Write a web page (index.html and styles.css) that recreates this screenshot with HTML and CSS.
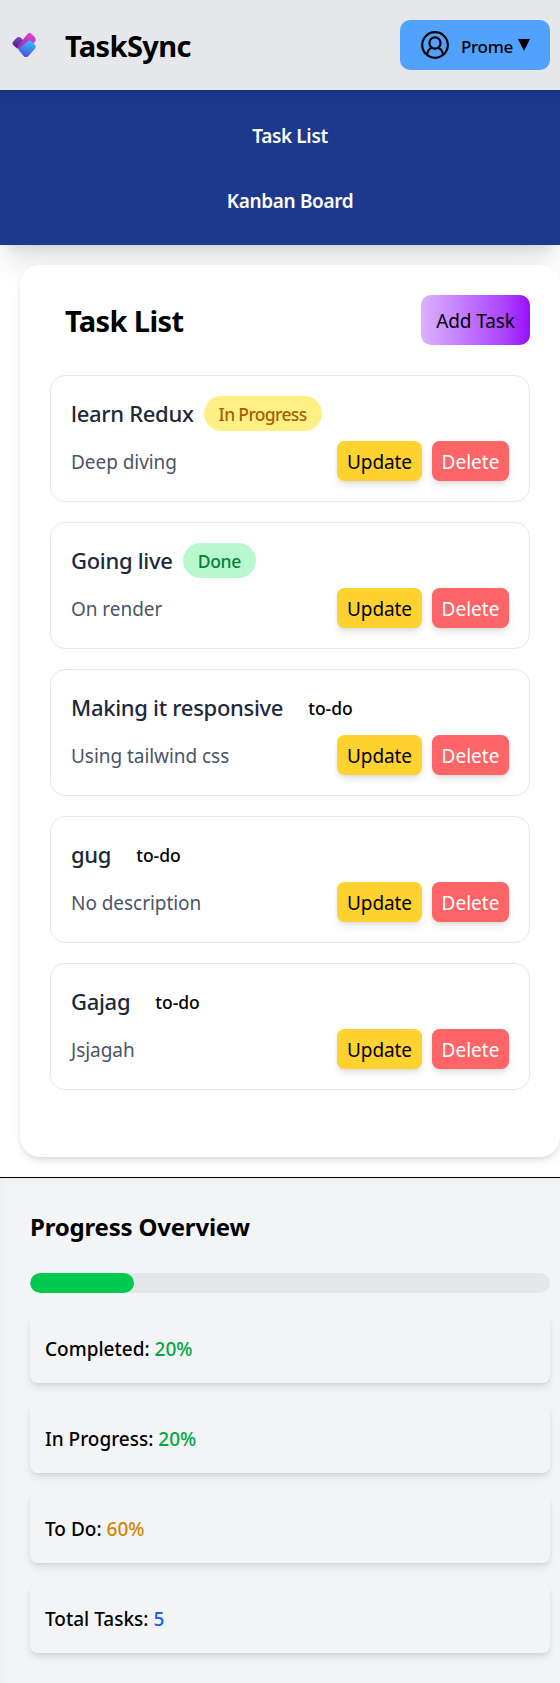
FILE: index.html
```html
<!DOCTYPE html>
<html lang="en">
<head>
<meta charset="utf-8">
<title>TaskSync</title>
<link rel="stylesheet" href="styles.css">
</head>
<body>
<header class="header">
  <div class="brand">
    <svg class="logo" viewBox="0 0 50 50" aria-hidden="true">
      <defs>
        <linearGradient id="violet" x1="0" y1="0" x2="0" y2="1"><stop offset="0" stop-color="#7048c4"/><stop offset="1" stop-color="#4b168c"/></linearGradient>
        <linearGradient id="pink" x1="1" y1="0" x2="0" y2="1"><stop offset="0" stop-color="#e047dc"/><stop offset="1" stop-color="#991fa6"/></linearGradient>
        <linearGradient id="blue" x1="0.7" y1="0" x2="0.4" y2="1"><stop offset="0" stop-color="#36bffa"/><stop offset="1" stop-color="#4a4ee0"/></linearGradient>
      </defs>
      <path fill="url(#violet)" d="M13.2 21.6 16.5 18.1Q18.8 15.9 21.1 18.1L24 21 17 28.5 13.2 25Q11.7 23.3 13.2 21.6Z"/>
      <path fill="url(#pink)" d="M16.5 27.8 27.2 14.3Q29.6 11.8 32 14.3L34.8 17.2Q36.8 19.5 34.8 21.8L26 33Z"/>
      <path fill="url(#blue)" d="M18 29.3 27.2 21.7Q29.6 19.4 32 21.7L34.8 24.5Q36.8 26.8 34.8 29.1L28.4 35.9Q26 38.3 23.6 35.9Z"/>
    </svg>
    <span class="brand-name">TaskSync</span>
  </div>
  <button class="user">
    <svg class="user-icon" viewBox="0 0 28 28" fill="none" stroke="#000" stroke-width="2.2" aria-hidden="true">
      <circle cx="14" cy="14" r="12.8"/>
      <circle cx="14" cy="12" r="5.6"/>
      <path d="M6 24C6.5 19.8 9 17.3 11.2 16.8M22 24C21.500 19.8 19 17.3 16.8 16.800"/>
    </svg>
    <span class="user-name">Prome</span>
    <svg class="caret" viewBox="0 0 12 12" aria-hidden="true"><path d="M0 0H12L6 12Z"/></svg>
  </button>
</header>
<nav class="nav">
  <a class="nav-link">Task List</a>
  <a class="nav-link">Kanban Board</a>
</nav>
<main class="panel">
  <div class="panel-head">
    <h1 class="panel-title">Task List</h1>
    <button class="add">Add Task</button>
  </div>
  <div class="tasks">
    <article class="task">
      <div class="task-top"><h2 class="task-title">learn Redux</h2><span class="badge badge-progress">In Progress</span></div>
      <div class="task-row"><p class="desc">Deep diving</p><button class="btn update">Update</button><button class="btn delete">Delete</button></div>
    </article>
    <article class="task">
      <div class="task-top"><h2 class="task-title">Going live</h2><span class="badge badge-done">Done</span></div>
      <div class="task-row"><p class="desc">On render</p><button class="btn update">Update</button><button class="btn delete">Delete</button></div>
    </article>
    <article class="task">
      <div class="task-top"><h2 class="task-title">Making it responsive</h2><span class="badge">to-do</span></div>
      <div class="task-row"><p class="desc">Using tailwind css</p><button class="btn update">Update</button><button class="btn delete">Delete</button></div>
    </article>
    <article class="task">
      <div class="task-top"><h2 class="task-title">gug</h2><span class="badge">to-do</span></div>
      <div class="task-row"><p class="desc">No description</p><button class="btn update">Update</button><button class="btn delete">Delete</button></div>
    </article>
    <article class="task">
      <div class="task-top"><h2 class="task-title">Gajag</h2><span class="badge">to-do</span></div>
      <div class="task-row"><p class="desc">Jsjagah</p><button class="btn update">Update</button><button class="btn delete">Delete</button></div>
    </article>
  </div>
</main>
<section class="overview">
  <h2 class="overview-title">Progress Overview</h2>
  <div class="bar"><div class="bar-fill" style="width:20%"></div></div>
  <div class="stats">
    <p class="stat">Completed: <span class="green">20%</span></p>
    <p class="stat">In Progress: <span class="green">20%</span></p>
    <p class="stat">To Do: <span class="amber">60%</span></p>
    <p class="stat">Total Tasks: <span class="blue">5</span></p>
  </div>
</section>
</body>
</html>
```
FILE: styles.css
```css
* { box-sizing: border-box; margin: 0; padding: 0; }
body { overflow-x: hidden; background: #fff; color: #000; font-family: "Noto Sans", "Open Sans", sans-serif; font-size: 19px; line-height: 30px; }
button { border: 0; font: inherit; color: inherit; white-space: nowrap; }
.header { display: flex; align-items: center; justify-content: space-between; height: 90px; padding-right: 10px; background: #e5e7eb; }
.brand { display: flex; align-items: center; gap: 15px; }
.logo { width: 50px; height: 50px; }
.brand-name, .panel-title { font-size: 29px; font-weight: 700; line-height: 45px; letter-spacing: -0.6px; }
.brand-name { padding-top: 1px; }
.user { display: flex; align-items: center; width: 150px; height: 50px; padding-left: 21px; border-radius: 10px; background: #51a2ff; }
.user-icon { width: 28px; height: 28px; margin-right: 12px; }
.user-name { width: 57px; text-align: left; font-size: 17px; font-weight: 500; letter-spacing: -0.3px; padding-top: 3px; }
.caret { width: 12px; height: 12px; }
.nav { position: relative; display: flex; flex-direction: column; gap: 35px; align-items: center; height: 155px; padding: 31px 0 0 20px; background: #1c398e; color: #fff; font-weight: 600; box-shadow: inset 0 9px 10px -7px rgba(0,0,0,.14), 0 25px 31px -6px rgba(0,0,0,.1), 0 10px 12px -7px rgba(0,0,0,.1); }
.nav-link { letter-spacing: -0.35px; }
.panel { position: relative; height: 892px; margin: 20px 0 20px 20px; padding: 30px; border-radius: 20px; background: #fff; box-shadow: 0 5px 8px -1px rgba(0,0,0,.1), 0 2px 5px -2px rgba(0,0,0,.1); }
.panel-head { display: flex; align-items: center; justify-content: space-between; height: 50px; margin-bottom: 30px; padding-left: 15px; }
.panel-title { padding-top: 1px; }
.add { width: 109px; height: 50px; border-radius: 10px; background: linear-gradient(90deg, #dab2ff, #ad46ff 75%, #9810fa); padding-top: 2px; letter-spacing: -0.1px; }
.tasks { display: flex; flex-direction: column; gap: 20px; }
.task { height: 127px; padding: 20px; border: 1px solid #e5e7eb; border-radius: 15px; }
.task-top { display: flex; align-items: center; gap: 10px; height: 35px; margin-bottom: 10px; }
.task-title { margin-top: -2px; font-size: 22px; font-weight: 500; color: #1e2939; letter-spacing: -0.3px; }
.badge { height: 35px; padding: 1px 15px 0; border-radius: 18px; font-size: 17.5px; font-weight: 500; line-height: 35px; }
.badge-progress { background: #fff085; color: #a65f00; letter-spacing: -0.65px; }
.badge-done { background: #b9f8cf; color: #008236; letter-spacing: -0.3px; }
.task-row { display: flex; align-items: center; gap: 10px; }
.desc { flex: 1; padding-top: 2px; color: #4a5565; letter-spacing: -0.05px; }
.btn { height: 40px; padding-top: 2px; border-radius: 7.5px; box-shadow: 0 5px 8px -1px rgba(0,0,0,.1), 0 2px 5px -2px rgba(0,0,0,.1); }
.update { width: 85px; background: #ffd230; letter-spacing: -0.1px; }
.delete { width: 77px; background: #ff6467; color: #fff; }
.overview { height: 506px; padding: 30px 10px 0 30px; border-top: 1px solid #000; background: #f3f4f6; box-shadow: inset 3px 3px 5px rgba(0,0,0,.025); }
.overview-title { height: 35px; margin-bottom: 30px; font-size: 24px; font-weight: 700; line-height: 37px; letter-spacing: -0.2px; }
.bar { height: 20px; margin-bottom: 20px; border-radius: 10px; background: #e5e7eb; overflow: hidden; }
.bar-fill { height: 20px; border-radius: 10px; background: #00c950; }
.stats { display: flex; flex-direction: column; gap: 20px; }
.stat { height: 70px; padding: 21px 15px 0; border-radius: 7.5px; background: #f3f4f6; font-weight: 500; box-shadow: 0 5px 8px -1px rgba(0,0,0,.1), 0 2px 5px -2px rgba(0,0,0,.1); }
.green { color: #00a63e; }
.amber { color: #d08700; }
.blue { color: #155dfc; }
```
